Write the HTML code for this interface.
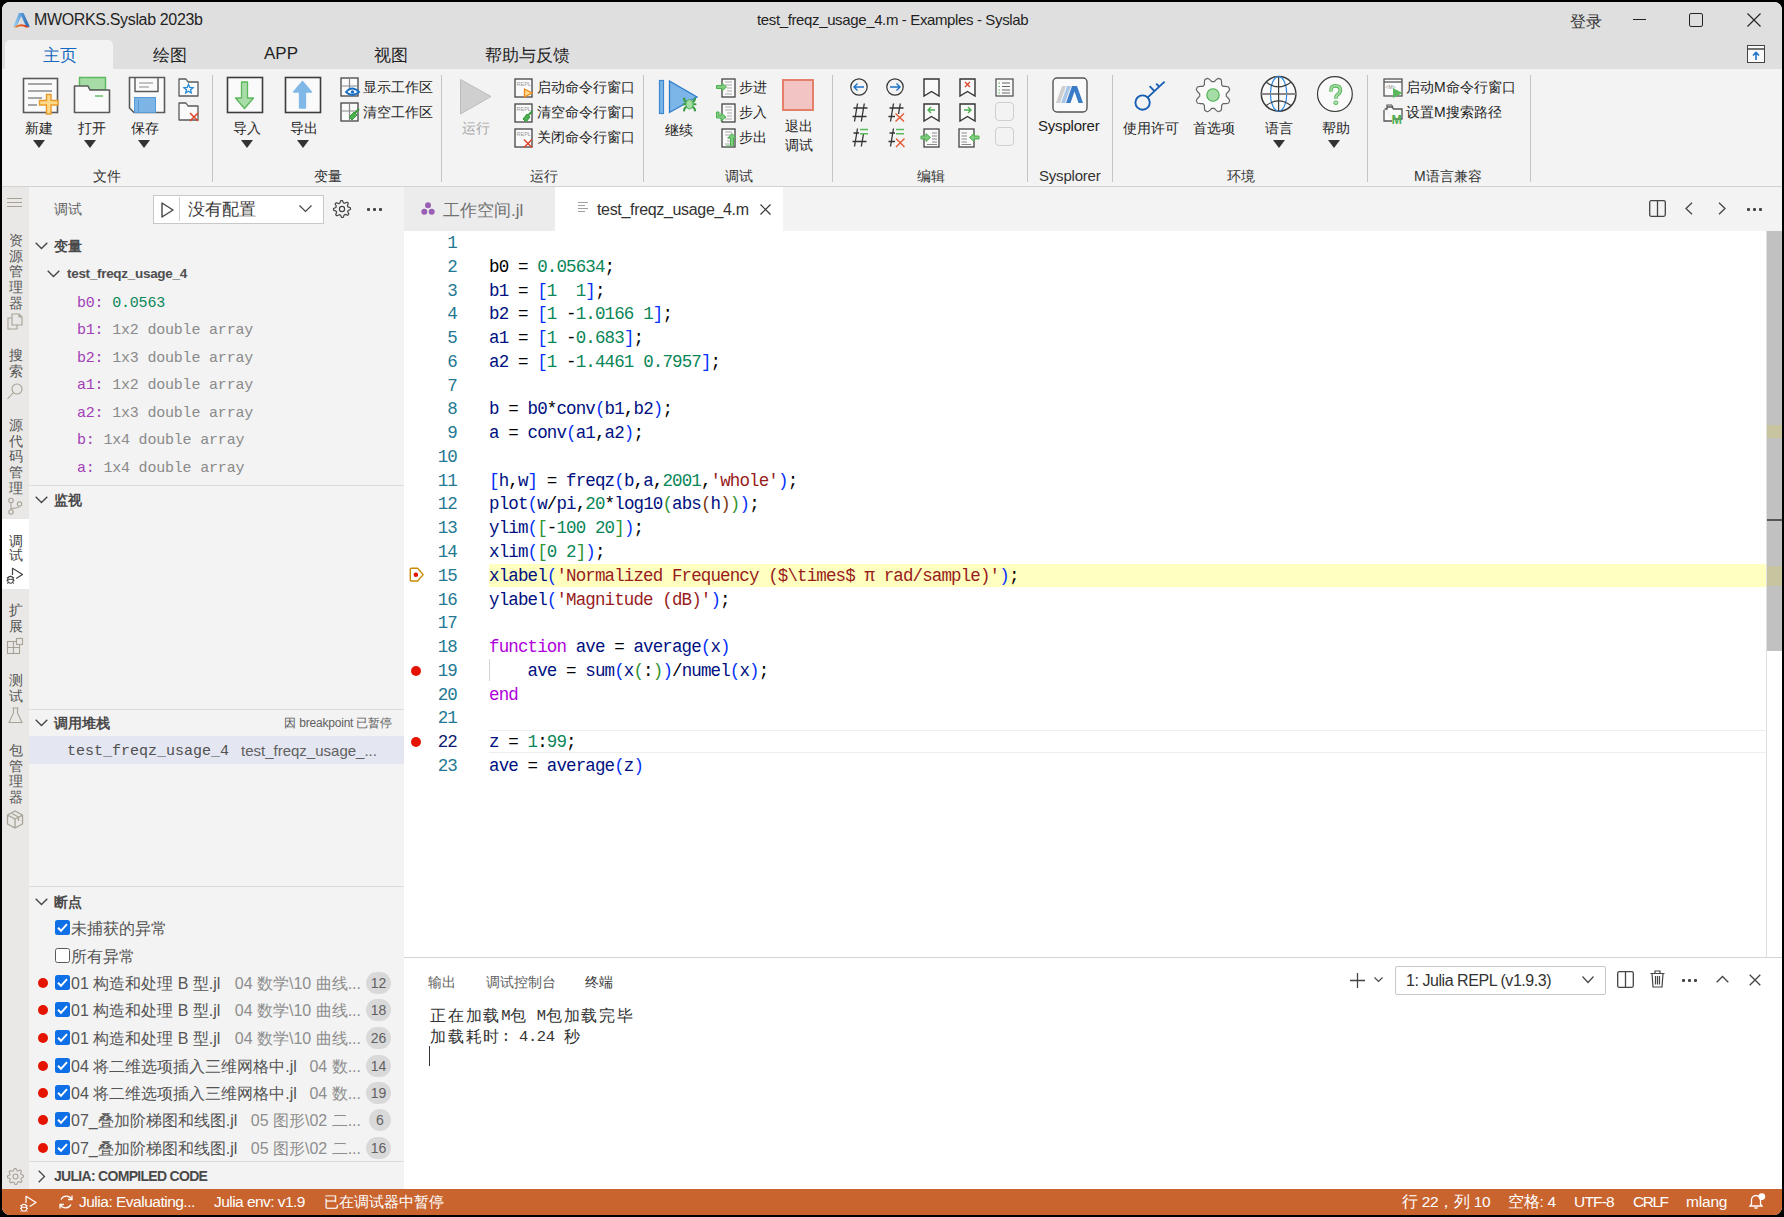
<!DOCTYPE html>
<html><head><meta charset="utf-8">
<style>
*{box-sizing:border-box;margin:0;padding:0}
html,body{width:1784px;height:1217px;overflow:hidden;background:#000}
body{position:relative;font-family:"Liberation Sans",sans-serif;color:#1f1f1f}
.a{position:absolute;white-space:nowrap}
.mono{font-family:"Liberation Mono",monospace}
svg{position:absolute;overflow:visible}
</style></head><body>
<div class="a" style="left:2px;top:2px;width:1780px;height:1213px;background:#f3f3f3;border-radius:8px"></div>
<div class="a" style="left:2px;top:2px;width:1780px;height:67px;background:#dfdfdf;border-radius:8px 8px 0 0"></div>
<div class="a" style="left:2px;top:69px;width:1780px;height:118px;background:#f3f3f3;border-bottom:1px solid #d2d2d2"></div>
<div class="a" style="left:2px;top:187px;width:27px;height:1002px;background:#e9e8e6"></div>
<div class="a" style="left:29px;top:187px;width:375px;height:1002px;background:#f3f3f3"></div>
<div class="a" style="left:404px;top:187px;width:1378px;height:44px;background:#f3f3f3"></div>
<div class="a" style="left:404px;top:231px;width:1378px;height:726px;background:#fff"></div>
<div class="a" style="left:404px;top:957px;width:1378px;height:232px;background:#fff;border-top:1px solid #d8d8d8"></div>
<div class="a" style="left:2px;top:1189px;width:1780px;height:26px;background:#c9642f;border-radius:0 0 8px 8px"></div>
<svg style="left:13px;top:12px" width="17" height="16" viewBox="0 0 17 16"><defs><linearGradient id="lg1" x1="0" y1="0" x2="1" y2="0"><stop offset="0" stop-color="#a8d4f2"/><stop offset="0.5" stop-color="#5a9ad8"/><stop offset="1" stop-color="#1f5fa8"/></linearGradient>
<linearGradient id="lg2" x1="0" y1="0" x2="1" y2="0"><stop offset="0" stop-color="#f58a1f"/><stop offset="1" stop-color="#d4201f"/></linearGradient></defs>
<path d="M5.8 1 H10.6 L16.8 14.8 H13.3 L8.2 4.2 L3.5 14.8 H0.2 Z" fill="url(#lg1)"/>
<path d="M0.8 15.4 Q8.3 9.2 16 15.4 L13 15.4 Q8.3 13 3.8 15.4 Z" fill="url(#lg2)"/></svg>
<div class="a" style="left:34px;top:11px;font-size:16px;letter-spacing:-0.35px;color:#1f1f1f">MWORKS.Syslab 2023b</div>
<div class="a" style="left:757px;top:11px;font-size:15px;letter-spacing:-0.37px;color:#1f1f1f">test_freqz_usage_4.m - Examples - Syslab</div>
<div class="a" style="left:1570px;top:12px;font-size:16px;color:#333">登录</div>
<div class="a" style="left:1633px;top:19px;width:13px;height:1px;background:#222"></div>
<div class="a" style="left:1689px;top:13px;width:14px;height:14px;border:1px solid #222;border-radius:2px"></div>
<svg style="left:1747px;top:13px" width="14" height="14" viewBox="0 0 14 14"><path d="M0.5 0.5 L13.5 13.5 M13.5 0.5 L0.5 13.5" stroke="#222" stroke-width="1.1"/></svg>
<svg style="left:1747px;top:45px" width="19" height="18" viewBox="0 0 19 18"><rect x="0.5" y="0.5" width="17" height="17" fill="#fafafa" stroke="#444"/><line x1="1" y1="4" x2="17" y2="4" stroke="#444" stroke-width="1.5"/><path d="M9 15 V8 M6 10.5 L9 7.5 L12 10.5" stroke="#1e73c8" stroke-width="1.6" fill="none"/></svg>
<div class="a" style="left:5px;top:40px;width:108px;height:30px;background:#f3f3f3;border-radius:5px 5px 0 0"></div>
<div class="a" style="left:43px;top:44px;font-size:17px;color:#1469be">主页</div>
<div class="a" style="left:153px;top:44px;font-size:17px;color:#1f1f1f">绘图</div>
<div class="a" style="left:264px;top:44px;font-size:17px;color:#1f1f1f">APP</div>
<div class="a" style="left:374px;top:44px;font-size:17px;color:#1f1f1f">视图</div>
<div class="a" style="left:485px;top:44px;font-size:17px;color:#1f1f1f">帮助与反馈</div>
<div class="a" style="left:212px;top:75px;width:1px;height:107px;background:#c4c4c4"></div>
<div class="a" style="left:441px;top:75px;width:1px;height:107px;background:#c4c4c4"></div>
<div class="a" style="left:643px;top:75px;width:1px;height:107px;background:#c4c4c4"></div>
<div class="a" style="left:832px;top:75px;width:1px;height:107px;background:#c4c4c4"></div>
<div class="a" style="left:1027px;top:75px;width:1px;height:107px;background:#c4c4c4"></div>
<div class="a" style="left:1112px;top:75px;width:1px;height:107px;background:#c4c4c4"></div>
<div class="a" style="left:1367px;top:75px;width:1px;height:107px;background:#c4c4c4"></div>
<div class="a" style="left:1530px;top:75px;width:1px;height:107px;background:#c4c4c4"></div>
<div class="a " style="left:93px;top:169px;font-size:14px;line-height:14px;color:#333;font-weight:normal;">文件</div>
<div class="a " style="left:314px;top:169px;font-size:14px;line-height:14px;color:#333;font-weight:normal;">变量</div>
<div class="a " style="left:530px;top:169px;font-size:14px;line-height:14px;color:#333;font-weight:normal;">运行</div>
<div class="a " style="left:725px;top:169px;font-size:14px;line-height:14px;color:#333;font-weight:normal;">调试</div>
<div class="a " style="left:917px;top:169px;font-size:14px;line-height:14px;color:#333;font-weight:normal;">编辑</div>
<div class="a " style="left:1227px;top:169px;font-size:14px;line-height:14px;color:#333;font-weight:normal;">环境</div>
<div class="a" style="left:1039px;top:168px;font-size:15px;line-height:15px;color:#333;letter-spacing:-0.2px">Sysplorer</div>
<div class="a" style="left:1414px;top:169px;font-size:14px;line-height:14px;color:#333">M语言兼容</div>
<svg style="left:22px;top:77px" width="38" height="38" viewBox="0 0 38 38"><rect x="1.5" y="1.5" width="34" height="34" fill="#fafafa" stroke="#5a5a5a" stroke-width="1.6"/>
<path d="M6 7 H30 M6 14 H30 M6 21 H20 M6 28 H15" stroke="#8a8a8a" stroke-width="1.4"/>
<path d="M24.5 17.5 H29 V23.5 H36 V28 H29 V37 H24.5 V28 H17.5 V23.5 H24.5 Z" fill="#ffd98a" stroke="#ea9a2a" stroke-width="1.4"/></svg>
<div class="a " style="left:25px;top:121px;font-size:14px;line-height:14px;color:#1f1f1f;font-weight:normal;">新建</div>
<svg style="left:33px;top:140px" width="12" height="8" viewBox="0 0 12 8"><path d="M0 0 L12 0 L6 8 Z" fill="#333"/></svg>
<svg style="left:73px;top:76px" width="38" height="38" viewBox="0 0 38 38"><path d="M6.5 1.5 H32.5 V14 H6.5 Z" fill="#a6dca6" stroke="#5cb85c" stroke-width="1.4"/>
<path d="M1.5 10 H15 L17 14 H36.5 V36.5 H1.5 Z" fill="#fafafa" stroke="#5a5a5a" stroke-width="1.6" stroke-linejoin="round"/>
<path d="M22 20 H30" stroke="#5cb85c" stroke-width="1.4"/></svg>
<div class="a " style="left:78px;top:121px;font-size:14px;line-height:14px;color:#1f1f1f;font-weight:normal;">打开</div>
<svg style="left:84px;top:140px" width="12" height="8" viewBox="0 0 12 8"><path d="M0 0 L12 0 L6 8 Z" fill="#333"/></svg>
<svg style="left:128px;top:76px" width="38" height="38" viewBox="0 0 38 38"><path d="M1.5 1.5 H36.5 V36.5 H6 L1.5 32 Z" fill="#fafafa" stroke="#5a5a5a" stroke-width="1.6"/>
<path d="M7 1.5 V15.5 H30 V1.5" fill="none" stroke="#5a5a5a" stroke-width="1.4"/>
<path d="M11 7 H25 M11 11 H21" stroke="#8a8a8a" stroke-width="1.2"/>
<rect x="6.5" y="21.5" width="21" height="15" fill="#7db4e6" stroke="#5a9ad6" stroke-width="1"/>
<path d="M10.5 24 V36" stroke="#5a9ad6" stroke-width="1"/></svg>
<div class="a " style="left:131px;top:121px;font-size:14px;line-height:14px;color:#1f1f1f;font-weight:normal;">保存</div>
<svg style="left:138px;top:140px" width="12" height="8" viewBox="0 0 12 8"><path d="M0 0 L12 0 L6 8 Z" fill="#333"/></svg>
<svg style="left:178px;top:78px" width="22" height="20" viewBox="0 0 22 20"><path d="M1 1 H8 L10 4 H20 V18 H1 Z" fill="#fafafa" stroke="#5a5a5a" stroke-width="1.3" stroke-linejoin="round"/>
<path d="M10.5 6.5 L11.8 9.5 L15 9.7 L12.6 11.8 L13.3 15 L10.5 13.3 L7.7 15 L8.4 11.8 L6 9.7 L9.2 9.5 Z" fill="none" stroke="#1e88d8" stroke-width="1.3"/></svg>
<svg style="left:178px;top:102px" width="22" height="20" viewBox="0 0 22 20"><path d="M1 1 H8 L10 4 H20 V18 H1 Z" fill="#fafafa" stroke="#5a5a5a" stroke-width="1.3" stroke-linejoin="round"/>
<path d="M12 11 L20 19 M20 11 L12 19" stroke="#e0442a" stroke-width="1.6"/></svg>
<svg style="left:226px;top:76px" width="38" height="38" viewBox="0 0 38 38"><rect x="1.5" y="1.5" width="35" height="35" fill="#fafafa" stroke="#3c3c3c" stroke-width="1.6"/>
<path d="M15.5 6 H21.5 V22 H27.5 L18.5 32.5 L9.5 22 H15.5 Z" fill="#a8dca8" stroke="#5cb85c" stroke-width="1.3" stroke-linejoin="round"/></svg>
<div class="a " style="left:233px;top:121px;font-size:14px;line-height:14px;color:#1f1f1f;font-weight:normal;">导入</div>
<svg style="left:241px;top:140px" width="12" height="8" viewBox="0 0 12 8"><path d="M0 0 L12 0 L6 8 Z" fill="#333"/></svg>
<svg style="left:284px;top:76px" width="38" height="38" viewBox="0 0 38 38"><rect x="1.5" y="1.5" width="35" height="35" fill="#fafafa" stroke="#3c3c3c" stroke-width="1.6"/>
<path d="M15.5 32 H21.5 V16 H27.5 L18.5 5.5 L9.5 16 H15.5 Z" fill="#80b8e8" stroke="#80b8e8" stroke-width="1.3" stroke-linejoin="round"/></svg>
<div class="a " style="left:290px;top:121px;font-size:14px;line-height:14px;color:#1f1f1f;font-weight:normal;">导出</div>
<svg style="left:297px;top:140px" width="12" height="8" viewBox="0 0 12 8"><path d="M0 0 L12 0 L6 8 Z" fill="#333"/></svg>
<svg style="left:340px;top:77px" width="20" height="20" viewBox="0 0 20 20"><rect x="1" y="1" width="17" height="18" fill="#fafafa" stroke="#444" stroke-width="1.3"/>
<path d="M1 9 H18 M9.5 1 V19" stroke="#888" stroke-width="1.2"/>
<path d="M6 15 Q12 8 19 15 Q12 21 6 15 Z" fill="#fff" stroke="#1a6fc4" stroke-width="1.8"/><circle cx="12.5" cy="15" r="1.8" fill="#1a6fc4"/></svg>
<div class="a " style="left:363px;top:80px;font-size:14px;line-height:14px;color:#1f1f1f;font-weight:normal;">显示工作区</div>
<svg style="left:340px;top:102px" width="20" height="20" viewBox="0 0 20 20"><rect x="1" y="1" width="17" height="18" fill="#fafafa" stroke="#444" stroke-width="1.3"/>
<path d="M1 9 H18 M9.5 1 V19" stroke="#888" stroke-width="1.2"/>
<path d="M9 15 L14 10 L17 13 L12 18 Z" fill="#4caf50" stroke="#3a9a3e" stroke-width="1"/><path d="M15 11 L19 7" stroke="#3a9a3e" stroke-width="2"/></svg>
<div class="a " style="left:363px;top:105px;font-size:14px;line-height:14px;color:#1f1f1f;font-weight:normal;">清空工作区</div>
<svg style="left:459px;top:78px" width="34" height="38" viewBox="0 0 34 38"><path d="M1.5 1.5 L32 18.5 L1.5 36 Z" fill="#cfcfcf" stroke="#bdbdbd" stroke-width="1"/></svg>
<div class="a " style="left:462px;top:121px;font-size:14px;line-height:14px;color:#a8a8a8;font-weight:normal;">运行</div>
<svg style="left:514px;top:78px" width="20" height="20" viewBox="0 0 20 20"><rect x="1" y="1" width="17" height="18" fill="#fafafa" stroke="#444" stroke-width="1.3"/>
<text x="2.5" y="8" font-size="5.5" font-family="Liberation Sans" fill="#999">REPL</text><path d="M10.5 11 L18 15 L10.5 19 Z" fill="#ffd98a" stroke="#ea8a1a" stroke-width="1.3"/></svg>
<div class="a " style="left:537px;top:80px;font-size:14px;line-height:14px;color:#1f1f1f;font-weight:normal;">启动命令行窗口</div>
<svg style="left:514px;top:103px" width="20" height="20" viewBox="0 0 20 20"><rect x="1" y="1" width="17" height="18" fill="#fafafa" stroke="#444" stroke-width="1.3"/>
<text x="2.5" y="8" font-size="5.5" font-family="Liberation Sans" fill="#999">REPL</text><path d="M9 16 L13 11 L16 14 L12 19 Z" fill="#4caf50" stroke="#3a9a3e" stroke-width="1"/><path d="M14.5 12 L18.5 8" stroke="#3a9a3e" stroke-width="2"/></svg>
<div class="a " style="left:537px;top:105px;font-size:14px;line-height:14px;color:#1f1f1f;font-weight:normal;">清空命令行窗口</div>
<svg style="left:514px;top:128px" width="20" height="20" viewBox="0 0 20 20"><rect x="1" y="1" width="17" height="18" fill="#fafafa" stroke="#444" stroke-width="1.3"/>
<text x="2.5" y="8" font-size="5.5" font-family="Liberation Sans" fill="#999">REPL</text><path d="M10 11.5 L18 19.5 M18 11.5 L10 19.5" stroke="#e0442a" stroke-width="1.5"/></svg>
<div class="a " style="left:537px;top:130px;font-size:14px;line-height:14px;color:#1f1f1f;font-weight:normal;">关闭命令行窗口</div>
<svg style="left:658px;top:79px" width="40" height="36" viewBox="0 0 40 36"><rect x="1.5" y="1.5" width="4" height="33" fill="#7cb5e8" stroke="#3a86d0" stroke-width="1.2"/>
<path d="M11.5 2 L39 18 L11.5 33.5 Z" fill="#7cb5e8" stroke="#2c7ccc" stroke-width="1.3"/>
<path d="M26 19.5 Q26.5 22.5 28.5 23 M37 19.5 Q36.5 22.5 34.5 23 M25.5 25.3 H28 M37.5 25.3 H35 M26 31.5 Q26.5 28.5 28.5 28 M37 31.5 Q36.5 28.5 34.5 28" fill="none" stroke="#3c9c44" stroke-width="2.1" stroke-linecap="round"/>
<ellipse cx="31.5" cy="25.3" rx="3.6" ry="4.6" fill="#a2dca2" stroke="#4caf50" stroke-width="1"/></svg>
<div class="a " style="left:665px;top:123px;font-size:14px;line-height:14px;color:#1f1f1f;font-weight:normal;">继续</div>
<svg style="left:716px;top:78px" width="21" height="20" viewBox="0 0 21 20"><rect x="6" y="1" width="13" height="18" fill="#fafafa" stroke="#444" stroke-width="1.3"/>
<path d="M9 4 H16 M9 7 H16 M11 10 H16 M11 13 H16 M9 16 H16" stroke="#aaa" stroke-width="1"/><path d="M0.5 7.5 H6 V5 L10.5 9 L6 13 V10.5 H0.5 Z" fill="#80cc80" stroke="#4caf50" stroke-width="1"/></svg>
<div class="a " style="left:739px;top:80px;font-size:14px;line-height:14px;color:#1f1f1f;font-weight:normal;">步进</div>
<svg style="left:716px;top:103px" width="21" height="20" viewBox="0 0 21 20"><rect x="6" y="1" width="13" height="18" fill="#fafafa" stroke="#444" stroke-width="1.3"/>
<path d="M9 4 H16 M9 7 H16 M11 10 H16 M11 13 H16 M9 16 H16" stroke="#aaa" stroke-width="1"/><path d="M0.5 9 V15 H5 V18 L10 14 L5 10 V12.5 H3 V9 Z" fill="#80cc80" stroke="#4caf50" stroke-width="1"/></svg>
<div class="a " style="left:739px;top:105px;font-size:14px;line-height:14px;color:#1f1f1f;font-weight:normal;">步入</div>
<svg style="left:716px;top:128px" width="21" height="20" viewBox="0 0 21 20"><rect x="6" y="1" width="13" height="18" fill="#fafafa" stroke="#444" stroke-width="1.3"/>
<path d="M9 4 H16 M9 7 H16 M11 10 H16 M11 13 H16 M9 16 H16" stroke="#aaa" stroke-width="1"/><path d="M10 18 H14.5 V10 H12 L16 5.5 L20 10 H17.5 V18" fill="#80cc80" stroke="#4caf50" stroke-width="1"/></svg>
<div class="a " style="left:739px;top:130px;font-size:14px;line-height:14px;color:#1f1f1f;font-weight:normal;">步出</div>
<div class="a" style="left:782px;top:79px;width:32px;height:32px;background:#f2c4c4;border:2px solid #e48068"></div>
<div class="a " style="left:785px;top:119px;font-size:14px;line-height:14px;color:#1f1f1f;font-weight:normal;">退出</div>
<div class="a " style="left:785px;top:138px;font-size:14px;line-height:14px;color:#1f1f1f;font-weight:normal;">调试</div>
<svg style="left:850px;top:78px" width="18" height="18" viewBox="0 0 18 18"><circle cx="9" cy="9" r="8.2" fill="none" stroke="#333" stroke-width="1.2"/><path d="M14 9 H4 M7.5 5.5 L4 9 L7.5 12.5" fill="none" stroke="#1e73c8" stroke-width="1.4"/></svg>
<svg style="left:886px;top:78px" width="18" height="18" viewBox="0 0 18 18"><circle cx="9" cy="9" r="8.2" fill="none" stroke="#333" stroke-width="1.2"/><path d="M4 9 H14 M10.5 5.5 L14 9 L10.5 12.5" fill="none" stroke="#1e73c8" stroke-width="1.4"/></svg>
<svg style="left:845px;top:103px" width="24" height="20" viewBox="0 0 24 20"><path d="M12.5 0.5 L9.5 18.5 M19.3 0.5 L16.3 18.5 M8.5 5 H22.5 M7.5 13.5 H21.5" stroke="#333" stroke-width="1.3" fill="none"/></svg>
<svg style="left:881px;top:103px" width="24" height="20" viewBox="0 0 24 20"><path d="M12.5 0.5 L9.5 18.5 M19.3 0.5 L17.5 11 M8.5 5 H22.5 M7.5 13.5 H14" stroke="#333" stroke-width="1.3" fill="none"/><path d="M14.5 10.5 L23 18.5 M23 10.5 L14.5 18.5" stroke="#e4572e" stroke-width="1.4"/></svg>
<svg style="left:845px;top:128px" width="24" height="20" viewBox="0 0 24 20"><path d="M12.5 0.5 L9.5 18.5 M18.5 6 L16.3 18.5 M8.5 5 H14 M7.5 13.5 H21.5" stroke="#333" stroke-width="1.3" fill="none"/><path d="M15 1.5 H23 M15 5.8 H23" stroke="#5cb85c" stroke-width="1.5"/></svg>
<svg style="left:881px;top:128px" width="24" height="20" viewBox="0 0 24 20"><path d="M12.5 0.5 L9.5 18.5 M8.5 5 H14 M7.5 13.5 H14" stroke="#333" stroke-width="1.3" fill="none"/><path d="M15 1.5 H23 M15 5.8 H23" stroke="#5cb85c" stroke-width="1.5"/><path d="M15 10.5 L23.5 19 M23.5 10.5 L15 19" stroke="#e4572e" stroke-width="1.4"/></svg>
<svg style="left:923px;top:78px" width="18" height="20" viewBox="0 0 18 20"><path d="M1 1 H16 V18 L8.5 13.5 L1 18 Z" fill="#fafafa" stroke="#333" stroke-width="1.4" stroke-linejoin="miter"/></svg>
<svg style="left:959px;top:78px" width="18" height="20" viewBox="0 0 18 20"><path d="M1 1 H16 V18 L8.5 13.5 L1 18 Z" fill="#fafafa" stroke="#333" stroke-width="1.4" stroke-linejoin="miter"/><path d="M6 4 L11 9 M11 4 L6 9" stroke="#e0442a" stroke-width="1.3"/></svg>
<svg style="left:923px;top:103px" width="18" height="20" viewBox="0 0 18 20"><path d="M1 1 H16 V18 L8.5 13.5 L1 18 Z" fill="#fafafa" stroke="#333" stroke-width="1.4" stroke-linejoin="miter"/><path d="M12 7 H5 M8 4 L5 7 L8 10" stroke="#4caf50" stroke-width="1.4" fill="none"/></svg>
<svg style="left:959px;top:103px" width="18" height="20" viewBox="0 0 18 20"><path d="M1 1 H16 V18 L8.5 13.5 L1 18 Z" fill="#fafafa" stroke="#333" stroke-width="1.4" stroke-linejoin="miter"/><path d="M5 7 H12 M9 4 L12 7 L9 10" stroke="#4caf50" stroke-width="1.4" fill="none"/></svg>
<svg style="left:921px;top:128px" width="21" height="20" viewBox="0 0 21 20"><rect x="3" y="1" width="15" height="18" fill="#fafafa" stroke="#444" stroke-width="1.3"/><path d="M11 5 H16 M11 8 H16 M11 11 H16 M11 14 H16 M6 16.5 H16" stroke="#888" stroke-width="1"/><path d="M0 8 H5 V5.5 L9.5 9.5 L5 13.5 V11 H0 Z" fill="#80cc80" stroke="#4caf50" stroke-width="1"/></svg>
<svg style="left:958px;top:128px" width="21" height="20" viewBox="0 0 21 20"><rect x="1" y="1" width="15" height="18" fill="#fafafa" stroke="#444" stroke-width="1.3"/><path d="M3.5 5 H9 M3.5 8 H9 M3.5 11 H9 M3.5 14 H9 M3.5 16.5 H13" stroke="#888" stroke-width="1"/><path d="M21 8 H16 V5.5 L11.5 9.5 L16 13.5 V11 H21 Z" fill="#80cc80" stroke="#4caf50" stroke-width="1"/></svg>
<svg style="left:995px;top:78px" width="19" height="19" viewBox="0 0 19 19"><rect x="1" y="1" width="17" height="17" fill="#fafafa" stroke="#555" stroke-width="1.3"/><path d="M7 5 H15 M7 8.5 H15 M7 12 H15 M7 15 H15" stroke="#666" stroke-width="1.1"/><path d="M3.5 5 H5 M3.5 8.5 H5 M3.5 12 H5 M3.5 15 H5" stroke="#4caf50" stroke-width="1.1"/></svg>
<div class="a" style="left:995px;top:102px;width:19px;height:19px;border:1px solid #cfcfcf;border-radius:4px;background:#f3f3f3"></div>
<div class="a" style="left:995px;top:127px;width:19px;height:19px;border:1px solid #cfcfcf;border-radius:4px;background:#f3f3f3"></div>
<svg style="left:1052px;top:77px" width="36" height="36" viewBox="0 0 36 36"><rect x="1" y="1" width="34" height="34" rx="4" fill="#fafafa" stroke="#555" stroke-width="1.4"/>
<path d="M4 26 L10 9 H14 L8 26 Z" fill="#cfcfcf"/>
<path d="M9 26 L15 9 H19 L13 26 Z" fill="#aac6e6"/>
<path d="M14 26 L20 9 H25 L31 26 H26.5 L22.5 14.5 L18.5 26 Z" fill="#3a7cc8"/></svg>
<div class="a" style="left:1038px;top:118px;font-size:15px;line-height:15px;color:#1f1f1f;letter-spacing:-0.2px">Sysplorer</div>
<svg style="left:1133px;top:80px" width="33" height="33" viewBox="0 0 33 33"><circle cx="9.6" cy="22.6" r="7.2" fill="none" stroke="#1a5fb4" stroke-width="1.9"/><path d="M14.8 17.4 L31.6 1.6 M21.5 11.1 L16.6 6.2 M26.2 6.7 L23.2 3.6" stroke="#1a5fb4" stroke-width="1.9" fill="none"/></svg>
<div class="a " style="left:1123px;top:121px;font-size:14px;line-height:14px;color:#1f1f1f;font-weight:normal;">使用许可</div>
<svg style="left:1195px;top:77px" width="36" height="36" viewBox="0 0 36 36"><path d="M31.30 18.00 L31.29 18.52 L31.26 19.04 L31.76 19.63 L32.41 20.28 L33.10 21.00 L33.76 21.78 L34.31 22.60 L34.64 23.41 L34.42 24.06 L34.17 24.70 L33.89 25.33 L33.59 25.94 L32.78 26.28 L31.82 26.47 L30.80 26.56 L29.80 26.58 L28.88 26.58 L28.11 26.64 L27.77 27.03 L27.40 27.40 L27.03 27.77 L26.64 28.11 L26.58 28.88 L26.58 29.80 L26.56 30.80 L26.47 31.82 L26.28 32.78 L25.94 33.59 L25.33 33.89 L24.70 34.17 L24.06 34.42 L23.41 34.64 L22.60 34.31 L21.78 33.76 L21.00 33.10 L20.28 32.41 L19.63 31.76 L19.04 31.26 L18.52 31.29 L18.00 31.30 L17.48 31.29 L16.96 31.26 L16.37 31.76 L15.72 32.41 L15.00 33.10 L14.22 33.76 L13.40 34.31 L12.59 34.64 L11.94 34.42 L11.30 34.17 L10.67 33.89 L10.06 33.59 L9.72 32.78 L9.53 31.82 L9.44 30.80 L9.42 29.80 L9.42 28.88 L9.36 28.11 L8.97 27.77 L8.60 27.40 L8.23 27.03 L7.89 26.64 L7.12 26.58 L6.20 26.58 L5.20 26.56 L4.18 26.47 L3.22 26.28 L2.41 25.94 L2.11 25.33 L1.83 24.70 L1.58 24.06 L1.36 23.41 L1.69 22.60 L2.24 21.78 L2.90 21.00 L3.59 20.28 L4.24 19.63 L4.74 19.04 L4.71 18.52 L4.70 18.00 L4.71 17.48 L4.74 16.96 L4.24 16.37 L3.59 15.72 L2.90 15.00 L2.24 14.22 L1.69 13.40 L1.36 12.59 L1.58 11.94 L1.83 11.30 L2.11 10.67 L2.41 10.06 L3.22 9.72 L4.18 9.53 L5.20 9.44 L6.20 9.42 L7.12 9.42 L7.89 9.36 L8.23 8.97 L8.60 8.60 L8.97 8.23 L9.36 7.89 L9.42 7.12 L9.42 6.20 L9.44 5.20 L9.53 4.18 L9.72 3.22 L10.06 2.41 L10.67 2.11 L11.30 1.83 L11.94 1.58 L12.59 1.36 L13.40 1.69 L14.22 2.24 L15.00 2.90 L15.72 3.59 L16.37 4.24 L16.96 4.74 L17.48 4.71 L18.00 4.70 L18.52 4.71 L19.04 4.74 L19.63 4.24 L20.28 3.59 L21.00 2.90 L21.78 2.24 L22.60 1.69 L23.41 1.36 L24.06 1.58 L24.70 1.83 L25.33 2.11 L25.94 2.41 L26.28 3.22 L26.47 4.18 L26.56 5.20 L26.58 6.20 L26.58 7.12 L26.64 7.89 L27.03 8.23 L27.40 8.60 L27.77 8.97 L28.11 9.36 L28.88 9.42 L29.80 9.42 L30.80 9.44 L31.82 9.53 L32.78 9.72 L33.59 10.06 L33.89 10.67 L34.17 11.30 L34.42 11.94 L34.64 12.59 L34.31 13.40 L33.76 14.22 L33.10 15.00 L32.41 15.72 L31.76 16.37 L31.26 16.96 L31.29 17.48 Z" fill="#fafafa" stroke="#666" stroke-width="1.2" stroke-linejoin="round"/><circle cx="18" cy="18" r="6.2" fill="#a6dca6" stroke="#4caf50" stroke-width="1.1"/></svg>
<div class="a " style="left:1193px;top:121px;font-size:14px;line-height:14px;color:#1f1f1f;font-weight:normal;">首选项</div>
<svg style="left:1260px;top:76px" width="38" height="37" viewBox="0 0 38 37"><circle cx="18.6" cy="17.9" r="17.3" fill="#fafafa" stroke="#3a3a3a" stroke-width="1.5"/>
<ellipse cx="18.6" cy="17.9" rx="8.2" ry="17.2" fill="none" stroke="#2f8ae0" stroke-width="1.2"/>
<path d="M1.3 17.9 H35.9" stroke="#8a8a8a" stroke-width="2"/>
<path d="M18.6 0.8 V35" stroke="#3a3a3a" stroke-width="1.2"/>
<path d="M6.3 6.3 Q18.6 15.5 30.9 6.3 M6.3 29.5 Q18.6 20.3 30.9 29.5" fill="none" stroke="#3a3a3a" stroke-width="1.1"/></svg>
<div class="a " style="left:1265px;top:121px;font-size:14px;line-height:14px;color:#1f1f1f;font-weight:normal;">语言</div>
<svg style="left:1273px;top:140px" width="12" height="8" viewBox="0 0 12 8"><path d="M0 0 L12 0 L6 8 Z" fill="#333"/></svg>
<svg style="left:1317px;top:76px" width="37" height="37" viewBox="0 0 37 37"><circle cx="17.9" cy="18.1" r="17.4" fill="#fafafa" stroke="#3a3a3a" stroke-width="1.2"/>
<g transform="translate(18.5 18) scale(0.85) translate(-18.5 -18)"><path d="M13.2 15.2 Q12.5 8.3 18.3 8.3 Q24.2 8.3 24.2 13.3 Q24.2 16.3 21.2 18.5 Q19 20 19 23.5" fill="none" stroke="#5cb85c" stroke-width="4.4" stroke-linejoin="round"/>
<path d="M13.2 15.2 Q12.5 8.3 18.3 8.3 Q24.2 8.3 24.2 13.3 Q24.2 16.3 21.2 18.5 Q19 20 19 23.5" fill="none" stroke="#a8dca8" stroke-width="2"/>
<ellipse cx="18.9" cy="28.3" rx="2.5" ry="2.2" fill="#a8dca8" stroke="#5cb85c" stroke-width="1.1"/></g></svg>
<div class="a " style="left:1322px;top:121px;font-size:14px;line-height:14px;color:#1f1f1f;font-weight:normal;">帮助</div>
<svg style="left:1328px;top:140px" width="12" height="8" viewBox="0 0 12 8"><path d="M0 0 L12 0 L6 8 Z" fill="#333"/></svg>
<svg style="left:1383px;top:78px" width="21" height="21" viewBox="0 0 21 21"><rect x="1" y="1" width="18" height="17" fill="#fafafa" stroke="#555" stroke-width="1.3"/><path d="M1 4 H19" stroke="#555" stroke-width="1.3"/><text x="2.5" y="11" font-size="5" font-family="Liberation Sans" fill="#888">&lt;M&gt;</text><path d="M10 10 L19.5 15 L10 20 Z" fill="#5cb85c"/></svg>
<div class="a " style="left:1406px;top:80px;font-size:14px;line-height:14px;color:#1f1f1f;font-weight:normal;">启动M命令行窗口</div>
<svg style="left:1383px;top:103px" width="21" height="21" viewBox="0 0 21 21"><path d="M4 4 H9 L10.5 6 H19 V16 H10 M1.5 6 H4 V4 M1 7 V18 H9" fill="#fafafa" stroke="#555" stroke-width="1.3"/><path d="M4 4 V2 H8.5 L10 4" fill="none" stroke="#555" stroke-width="1.2"/><text x="8.5" y="20.5" font-size="12.5" font-weight="bold" font-family="Liberation Sans" fill="#4caf50">M</text></svg>
<div class="a " style="left:1406px;top:105px;font-size:14px;line-height:14px;color:#1f1f1f;font-weight:normal;">设置M搜索路径</div>
<div class="a" style="left:2px;top:519px;width:27px;height:70px;background:#ffffff"></div>
<div class="a " style="left:9px;top:233.5px;font-size:13.5px;line-height:13.5px;color:#555;font-weight:normal;">资</div>
<div class="a " style="left:9px;top:249.5px;font-size:13.5px;line-height:13.5px;color:#555;font-weight:normal;">源</div>
<div class="a " style="left:9px;top:264.5px;font-size:13.5px;line-height:13.5px;color:#555;font-weight:normal;">管</div>
<div class="a " style="left:9px;top:280.5px;font-size:13.5px;line-height:13.5px;color:#555;font-weight:normal;">理</div>
<div class="a " style="left:9px;top:296.5px;font-size:13.5px;line-height:13.5px;color:#555;font-weight:normal;">器</div>
<div class="a " style="left:9px;top:348.5px;font-size:13.5px;line-height:13.5px;color:#555;font-weight:normal;">搜</div>
<div class="a " style="left:9px;top:364.5px;font-size:13.5px;line-height:13.5px;color:#555;font-weight:normal;">索</div>
<div class="a " style="left:9px;top:418.5px;font-size:13.5px;line-height:13.5px;color:#555;font-weight:normal;">源</div>
<div class="a " style="left:9px;top:434.5px;font-size:13.5px;line-height:13.5px;color:#555;font-weight:normal;">代</div>
<div class="a " style="left:9px;top:449.5px;font-size:13.5px;line-height:13.5px;color:#555;font-weight:normal;">码</div>
<div class="a " style="left:9px;top:465.5px;font-size:13.5px;line-height:13.5px;color:#555;font-weight:normal;">管</div>
<div class="a " style="left:9px;top:481.5px;font-size:13.5px;line-height:13.5px;color:#555;font-weight:normal;">理</div>
<div class="a " style="left:9px;top:534.5px;font-size:13.5px;line-height:13.5px;color:#444;font-weight:normal;">调</div>
<div class="a " style="left:9px;top:548.5px;font-size:13.5px;line-height:13.5px;color:#444;font-weight:normal;">试</div>
<div class="a " style="left:9px;top:603.5px;font-size:13.5px;line-height:13.5px;color:#555;font-weight:normal;">扩</div>
<div class="a " style="left:9px;top:619.5px;font-size:13.5px;line-height:13.5px;color:#555;font-weight:normal;">展</div>
<div class="a " style="left:9px;top:673.5px;font-size:13.5px;line-height:13.5px;color:#555;font-weight:normal;">测</div>
<div class="a " style="left:9px;top:689.5px;font-size:13.5px;line-height:13.5px;color:#555;font-weight:normal;">试</div>
<div class="a " style="left:9px;top:743.5px;font-size:13.5px;line-height:13.5px;color:#555;font-weight:normal;">包</div>
<div class="a " style="left:9px;top:759.5px;font-size:13.5px;line-height:13.5px;color:#555;font-weight:normal;">管</div>
<div class="a " style="left:9px;top:774.5px;font-size:13.5px;line-height:13.5px;color:#555;font-weight:normal;">理</div>
<div class="a " style="left:9px;top:790.5px;font-size:13.5px;line-height:13.5px;color:#555;font-weight:normal;">器</div>
<svg style="left:7px;top:198px" width="16" height="9" viewBox="0 0 16 9"><path d="M0 0.5 H15 M0 4.5 H15 M0 8.5 H15" stroke="#a8a296" stroke-width="1.1"/></svg>
<svg style="left:7px;top:313px" width="16" height="17" viewBox="0 0 16 17"><path d="M5 1 H12 L15 4 V12 H5 Z M12 1 V4 H15" fill="none" stroke="#a8a296" stroke-width="1.1"/><path d="M5 5 H1 V16 H10 V12" fill="none" stroke="#a8a296" stroke-width="1.1"/></svg>
<svg style="left:7px;top:383px" width="16" height="17" viewBox="0 0 16 17"><circle cx="10" cy="6" r="5" fill="none" stroke="#a8a296" stroke-width="1.1"/><path d="M6.5 9.5 L0.5 16" stroke="#a8a296" stroke-width="1.1"/></svg>
<svg style="left:8px;top:498px" width="14" height="17" viewBox="0 0 14 17"><circle cx="3" cy="2.5" r="2.2" fill="none" stroke="#a8a296" stroke-width="1.1"/><circle cx="3" cy="14" r="2.2" fill="none" stroke="#a8a296" stroke-width="1.1"/><circle cx="11.5" cy="6" r="2.2" fill="none" stroke="#a8a296" stroke-width="1.1"/><path d="M3 4.7 V11.8 M11.5 8.2 Q11.5 10 3 10.5" fill="none" stroke="#a8a296" stroke-width="1.1"/></svg>
<svg style="left:0px;top:560px" width="30" height="30" viewBox="0 560 30 30"><path d="M12.5 575 V568.3 L22.5 574.5 L16.2 578.6" fill="none" stroke="#444" stroke-width="1.2" stroke-linejoin="round"/><ellipse cx="10.5" cy="579.8" rx="2.8" ry="3.4" fill="none" stroke="#444" stroke-width="1.1"/><path d="M7.5 579.3 H13.5 M6.8 577.5 L8 578 M14.2 577.5 L13 578 M6.5 580.5 H7.8 M14.5 580.5 H13.2 M7 583.5 L8 582.8 M14 583.5 L13 582.8" stroke="#444" stroke-width="1"/></svg>
<svg style="left:7px;top:638px" width="17" height="17" viewBox="0 0 17 17"><rect x="0.5" y="3.5" width="12" height="12" fill="none" stroke="#a8a296" stroke-width="1.1"/><path d="M6.5 3.5 V15.5 M0.5 9.5 H12.5" stroke="#a8a296" stroke-width="1.1"/><rect x="9.5" y="0.5" width="6" height="6" fill="#e9e8e6" stroke="#a8a296" stroke-width="1.1"/></svg>
<svg style="left:8px;top:707px" width="15" height="17" viewBox="0 0 15 17"><path d="M4.5 1 H10.5 M5.5 1 V6 L1 15.5 H14 L9.5 6 V1" fill="none" stroke="#a8a296" stroke-width="1.1"/></svg>
<svg style="left:7px;top:810px" width="17" height="19" viewBox="0 0 17 19"><path d="M8 1 L15.5 5 V14 L8 18 L0.5 14 V5 Z M0.5 5 L8 9 L15.5 5 M8 9 V18 M4 3 L11.5 7 V11" fill="none" stroke="#a8a296" stroke-width="1.3" stroke-linejoin="round"/></svg>
<svg style="left:7px;top:1168px" width="17" height="17" viewBox="0 0 17 17"><path d="M16.41 7.33 L16.49 8.89 L14.32 9.96 L13.92 11.07 L14.93 13.27 L13.87 14.43 L11.58 13.65 L10.52 14.15 L9.67 16.41 L8.11 16.49 L7.04 14.32 L5.93 13.92 L3.73 14.93 L2.57 13.87 L3.35 11.58 L2.85 10.52 L0.59 9.67 L0.51 8.11 L2.68 7.04 L3.08 5.93 L2.07 3.73 L3.13 2.57 L5.42 3.35 L6.48 2.85 L7.33 0.59 L8.89 0.51 L9.96 2.68 L11.07 3.08 L13.27 2.07 L14.43 3.13 L13.65 5.42 L14.15 6.48 Z" fill="none" stroke="#a8a296" stroke-width="1.1" stroke-linejoin="round"/><circle cx="8.5" cy="8.5" r="2.5" fill="none" stroke="#a8a296" stroke-width="1.1"/></svg>
<div class="a " style="left:54px;top:202px;font-size:14px;line-height:14px;color:#616161;font-weight:normal;">调试</div>
<div class="a" style="left:153px;top:195px;width:171px;height:29px;background:#fff;border:1px solid #c8c8c8"></div>
<svg style="left:161px;top:202px" width="13" height="16" viewBox="0 0 13 16"><path d="M1 1 L12 8 L1 15 Z" fill="none" stroke="#444" stroke-width="1.4" stroke-linejoin="round"/></svg>
<div class="a" style="left:179px;top:197px;width:1px;height:24px;background:#d0d0d0"></div>
<div class="a " style="left:188px;top:201px;font-size:17px;line-height:17px;color:#3b3b3b;font-weight:normal;">没有配置</div>
<svg style="left:299px;top:205px" width="13" height="8" viewBox="0 0 13 8"><path d="M0.5 0.5 L6.5 6.5 L12.5 0.5" fill="none" stroke="#444" stroke-width="1.2"/></svg>
<svg style="left:333px;top:200px" width="18" height="18" viewBox="0 0 18 18"><path d="M17.41 7.75 L17.49 9.42 L15.11 10.53 L14.70 11.69 L15.83 14.06 L14.71 15.30 L12.24 14.40 L11.12 14.93 L10.25 17.41 L8.58 17.49 L7.47 15.11 L6.31 14.70 L3.94 15.83 L2.70 14.71 L3.60 12.24 L3.07 11.12 L0.59 10.25 L0.51 8.58 L2.89 7.47 L3.30 6.31 L2.17 3.94 L3.29 2.70 L5.76 3.60 L6.88 3.07 L7.75 0.59 L9.42 0.51 L10.53 2.89 L11.69 3.30 L14.06 2.17 L15.30 3.29 L14.40 5.76 L14.93 6.88 Z" fill="none" stroke="#444" stroke-width="1.2" stroke-linejoin="round"/><circle cx="9" cy="9" r="2.6" fill="none" stroke="#444" stroke-width="1.2"/></svg>
<div class="a" style="left:367px;top:208px;width:3px;height:3px;background:#444;border-radius:1px"></div>
<div class="a" style="left:373px;top:208px;width:3px;height:3px;background:#444;border-radius:1px"></div>
<div class="a" style="left:379px;top:208px;width:3px;height:3px;background:#444;border-radius:1px"></div>
<svg style="left:35px;top:242px" width="13" height="8" viewBox="0 0 13 8"><path d="M0.7 0.7 L6.5 6.5 L12.3 0.7" fill="none" stroke="#444" stroke-width="1.3"/></svg>
<div class="a " style="left:54px;top:239px;font-size:14px;line-height:14px;color:#4a4a4a;font-weight:bold;">变量</div>
<svg style="left:47px;top:270px" width="13" height="8" viewBox="0 0 13 8"><path d="M0.7 0.7 L6.5 6.5 L12.3 0.7" fill="none" stroke="#444" stroke-width="1.3"/></svg>
<div class="a" style="left:67px;top:266px;font-size:13.5px;line-height:16px;letter-spacing:-0.3px;color:#4f4f4f;font-weight:bold">test_freqz_usage_4</div>
<div class="a mono" style="left:77px;top:295.5px;font-size:15px;line-height:16px;letter-spacing:-0.2px;color:#098658"><span style="color:#a240b6">b0:</span> 0.0563</div>
<div class="a mono" style="left:77px;top:323.0px;font-size:15px;line-height:16px;letter-spacing:-0.2px;color:#8a8a8a"><span style="color:#a240b6">b1:</span> 1x2 double array</div>
<div class="a mono" style="left:77px;top:350.5px;font-size:15px;line-height:16px;letter-spacing:-0.2px;color:#8a8a8a"><span style="color:#a240b6">b2:</span> 1x3 double array</div>
<div class="a mono" style="left:77px;top:378.0px;font-size:15px;line-height:16px;letter-spacing:-0.2px;color:#8a8a8a"><span style="color:#a240b6">a1:</span> 1x2 double array</div>
<div class="a mono" style="left:77px;top:405.5px;font-size:15px;line-height:16px;letter-spacing:-0.2px;color:#8a8a8a"><span style="color:#a240b6">a2:</span> 1x3 double array</div>
<div class="a mono" style="left:77px;top:433.0px;font-size:15px;line-height:16px;letter-spacing:-0.2px;color:#8a8a8a"><span style="color:#a240b6">b:</span> 1x4 double array</div>
<div class="a mono" style="left:77px;top:460.5px;font-size:15px;line-height:16px;letter-spacing:-0.2px;color:#8a8a8a"><span style="color:#a240b6">a:</span> 1x4 double array</div>
<div class="a" style="left:29px;top:485px;width:375px;height:1px;background:#dcdcdc"></div>
<svg style="left:35px;top:496px" width="13" height="8" viewBox="0 0 13 8"><path d="M0.7 0.7 L6.5 6.5 L12.3 0.7" fill="none" stroke="#444" stroke-width="1.3"/></svg>
<div class="a " style="left:54px;top:493px;font-size:14px;line-height:14px;color:#4a4a4a;font-weight:bold;">监视</div>
<div class="a" style="left:29px;top:709px;width:375px;height:1px;background:#dcdcdc"></div>
<svg style="left:35px;top:719px" width="13" height="8" viewBox="0 0 13 8"><path d="M0.7 0.7 L6.5 6.5 L12.3 0.7" fill="none" stroke="#444" stroke-width="1.3"/></svg>
<div class="a " style="left:54px;top:716px;font-size:14px;line-height:14px;color:#4a4a4a;font-weight:bold;">调用堆栈</div>
<div class="a " style="left:284px;top:718px;font-size:11.5px;line-height:11.5px;color:#616161;font-weight:normal;">因 <span style="font-size:12px;letter-spacing:-0.2px">breakpoint</span> 已暂停</div>
<div class="a" style="left:29px;top:736px;width:375px;height:28px;background:#e4e6f1"></div>
<div class="a mono" style="left:67px;top:743.5px;font-size:15px;line-height:16px;letter-spacing:0px;color:#505050">test_freqz_usage_4</div>
<div class="a" style="left:241px;top:743px;font-size:15px;line-height:16px;color:#616161">test_freqz_usage_...</div>
<div class="a" style="left:29px;top:886px;width:375px;height:1px;background:#dcdcdc"></div>
<svg style="left:35px;top:898px" width="13" height="8" viewBox="0 0 13 8"><path d="M0.7 0.7 L6.5 6.5 L12.3 0.7" fill="none" stroke="#444" stroke-width="1.3"/></svg>
<div class="a " style="left:54px;top:895px;font-size:14px;line-height:14px;color:#4a4a4a;font-weight:bold;">断点</div>
<svg style="left:55px;top:920px" width="15" height="15" viewBox="0 0 15 15"><rect x="0" y="0" width="15" height="15" rx="2.5" fill="#0f6fe6"/><path d="M3 7.8 L6 10.8 L12 4.2" fill="none" stroke="#fff" stroke-width="2"/></svg>
<div class="a " style="left:71px;top:921px;font-size:16px;line-height:16px;color:#555;font-weight:normal;">未捕获的异常</div>
<div class="a" style="left:55px;top:948px;width:15px;height:15px;background:#fff;border:1.3px solid #5a5a5a;border-radius:2.5px"></div>
<div class="a " style="left:71px;top:949px;font-size:16px;line-height:16px;color:#555;font-weight:normal;">所有异常</div>
<div class="a" style="left:38px;top:978px;width:10px;height:10px;border-radius:50%;background:#e51400"></div>
<svg style="left:55px;top:975px" width="15" height="15" viewBox="0 0 15 15"><rect x="0" y="0" width="15" height="15" rx="2.5" fill="#0f6fe6"/><path d="M3 7.8 L6 10.8 L12 4.2" fill="none" stroke="#fff" stroke-width="2"/></svg>
<div class="a " style="left:71px;top:976px;font-size:16px;line-height:16px;color:#555;font-weight:normal;">01 构造和处理 B 型.jl</div>
<div class="a" id="bp0" style="right:1423px;top:976px;font-size:16px;line-height:16px;color:#8e8e8e">04 数学\10 曲线...</div>
<div class="a" style="left:366px;top:972px;width:25px;height:22px;border-radius:11px;background:#d9d9d9;color:#616161;font-size:14px;line-height:22px;text-align:center">12</div>
<div class="a" style="left:38px;top:1005px;width:10px;height:10px;border-radius:50%;background:#e51400"></div>
<svg style="left:55px;top:1002px" width="15" height="15" viewBox="0 0 15 15"><rect x="0" y="0" width="15" height="15" rx="2.5" fill="#0f6fe6"/><path d="M3 7.8 L6 10.8 L12 4.2" fill="none" stroke="#fff" stroke-width="2"/></svg>
<div class="a " style="left:71px;top:1003px;font-size:16px;line-height:16px;color:#555;font-weight:normal;">01 构造和处理 B 型.jl</div>
<div class="a" id="bp1" style="right:1423px;top:1003px;font-size:16px;line-height:16px;color:#8e8e8e">04 数学\10 曲线...</div>
<div class="a" style="left:366px;top:999px;width:25px;height:22px;border-radius:11px;background:#d9d9d9;color:#616161;font-size:14px;line-height:22px;text-align:center">18</div>
<div class="a" style="left:38px;top:1033px;width:10px;height:10px;border-radius:50%;background:#e51400"></div>
<svg style="left:55px;top:1030px" width="15" height="15" viewBox="0 0 15 15"><rect x="0" y="0" width="15" height="15" rx="2.5" fill="#0f6fe6"/><path d="M3 7.8 L6 10.8 L12 4.2" fill="none" stroke="#fff" stroke-width="2"/></svg>
<div class="a " style="left:71px;top:1031px;font-size:16px;line-height:16px;color:#555;font-weight:normal;">01 构造和处理 B 型.jl</div>
<div class="a" id="bp2" style="right:1423px;top:1031px;font-size:16px;line-height:16px;color:#8e8e8e">04 数学\10 曲线...</div>
<div class="a" style="left:366px;top:1027px;width:25px;height:22px;border-radius:11px;background:#d9d9d9;color:#616161;font-size:14px;line-height:22px;text-align:center">26</div>
<div class="a" style="left:38px;top:1061px;width:10px;height:10px;border-radius:50%;background:#e51400"></div>
<svg style="left:55px;top:1058px" width="15" height="15" viewBox="0 0 15 15"><rect x="0" y="0" width="15" height="15" rx="2.5" fill="#0f6fe6"/><path d="M3 7.8 L6 10.8 L12 4.2" fill="none" stroke="#fff" stroke-width="2"/></svg>
<div class="a " style="left:71px;top:1059px;font-size:16px;line-height:16px;color:#555;font-weight:normal;">04 将二维选项插入三维网格中.jl</div>
<div class="a" id="bp3" style="right:1423px;top:1059px;font-size:16px;line-height:16px;color:#8e8e8e">04 数...</div>
<div class="a" style="left:366px;top:1055px;width:25px;height:22px;border-radius:11px;background:#d9d9d9;color:#616161;font-size:14px;line-height:22px;text-align:center">14</div>
<div class="a" style="left:38px;top:1088px;width:10px;height:10px;border-radius:50%;background:#e51400"></div>
<svg style="left:55px;top:1085px" width="15" height="15" viewBox="0 0 15 15"><rect x="0" y="0" width="15" height="15" rx="2.5" fill="#0f6fe6"/><path d="M3 7.8 L6 10.8 L12 4.2" fill="none" stroke="#fff" stroke-width="2"/></svg>
<div class="a " style="left:71px;top:1086px;font-size:16px;line-height:16px;color:#555;font-weight:normal;">04 将二维选项插入三维网格中.jl</div>
<div class="a" id="bp4" style="right:1423px;top:1086px;font-size:16px;line-height:16px;color:#8e8e8e">04 数...</div>
<div class="a" style="left:366px;top:1082px;width:25px;height:22px;border-radius:11px;background:#d9d9d9;color:#616161;font-size:14px;line-height:22px;text-align:center">19</div>
<div class="a" style="left:38px;top:1115px;width:10px;height:10px;border-radius:50%;background:#e51400"></div>
<svg style="left:55px;top:1112px" width="15" height="15" viewBox="0 0 15 15"><rect x="0" y="0" width="15" height="15" rx="2.5" fill="#0f6fe6"/><path d="M3 7.8 L6 10.8 L12 4.2" fill="none" stroke="#fff" stroke-width="2"/></svg>
<div class="a " style="left:71px;top:1113px;font-size:16px;line-height:16px;color:#555;font-weight:normal;">07_叠加阶梯图和线图.jl</div>
<div class="a" id="bp5" style="right:1423px;top:1113px;font-size:16px;line-height:16px;color:#8e8e8e">05 图形\02 二...</div>
<div class="a" style="left:369px;top:1109px;width:22px;height:22px;border-radius:11px;background:#d9d9d9;color:#616161;font-size:14px;line-height:22px;text-align:center">6</div>
<div class="a" style="left:38px;top:1143px;width:10px;height:10px;border-radius:50%;background:#e51400"></div>
<svg style="left:55px;top:1140px" width="15" height="15" viewBox="0 0 15 15"><rect x="0" y="0" width="15" height="15" rx="2.5" fill="#0f6fe6"/><path d="M3 7.8 L6 10.8 L12 4.2" fill="none" stroke="#fff" stroke-width="2"/></svg>
<div class="a " style="left:71px;top:1141px;font-size:16px;line-height:16px;color:#555;font-weight:normal;">07_叠加阶梯图和线图.jl</div>
<div class="a" id="bp6" style="right:1423px;top:1141px;font-size:16px;line-height:16px;color:#8e8e8e">05 图形\02 二...</div>
<div class="a" style="left:366px;top:1137px;width:25px;height:22px;border-radius:11px;background:#d9d9d9;color:#616161;font-size:14px;line-height:22px;text-align:center">16</div>
<div class="a" style="left:29px;top:1161px;width:375px;height:1px;background:#dcdcdc"></div>
<svg style="left:38px;top:1170px" width="8" height="13" viewBox="0 0 8 13"><path d="M0.7 0.7 L6.5 6.5 L0.7 12.3" fill="none" stroke="#444" stroke-width="1.3"/></svg>
<div class="a" style="left:54px;top:1169px;font-size:14px;line-height:14px;letter-spacing:-0.7px;color:#4a4a4a;font-weight:bold">JULIA: COMPILED CODE</div>
<div class="a" style="left:404px;top:187px;width:151px;height:44px;background:#ececec"></div>
<div class="a" style="left:555px;top:187px;width:228px;height:44px;background:#fff"></div>
<svg style="left:421px;top:202px" width="14" height="14" viewBox="0 0 14 14"><circle cx="7" cy="3.2" r="3" fill="#9a5fb5"/><circle cx="3.3" cy="9.8" r="3" fill="#9a5fb5"/><circle cx="10.7" cy="9.8" r="3" fill="#9a5fb5"/></svg>
<div class="a " style="left:443px;top:202px;font-size:17px;line-height:17px;color:#717171;font-weight:normal;">工作空间.jl</div>
<svg style="left:578px;top:202px" width="10" height="11" viewBox="0 0 10 11"><path d="M0 0.5 H10 M0 3.5 H7 M0 6.5 H10 M0 9.5 H7" stroke="#a0a0a0" stroke-width="1.1"/></svg>
<div class="a" style="left:597px;top:202px;font-size:16px;line-height:16px;letter-spacing:-0.33px;color:#333">test_freqz_usage_4.m</div>
<svg style="left:760px;top:204px" width="11" height="11" viewBox="0 0 11 11"><path d="M0.5 0.5 L10.5 10.5 M10.5 0.5 L0.5 10.5" stroke="#333" stroke-width="1.2"/></svg>
<svg style="left:1649px;top:200px" width="17" height="17" viewBox="0 0 17 17"><rect x="0.7" y="0.7" width="15.6" height="15.6" rx="1.5" fill="none" stroke="#444" stroke-width="1.3"/><path d="M8.5 1 V16" stroke="#444" stroke-width="1.3"/></svg>
<svg style="left:1685px;top:202px" width="8" height="13" viewBox="0 0 8 13"><path d="M7 0.7 L1 6.5 L7 12.3" fill="none" stroke="#444" stroke-width="1.3"/></svg>
<svg style="left:1718px;top:202px" width="8" height="13" viewBox="0 0 8 13"><path d="M1 0.7 L7 6.5 L1 12.3" fill="none" stroke="#444" stroke-width="1.3"/></svg>
<div class="a" style="left:1747px;top:208px;width:3px;height:3px;background:#444;border-radius:1px"></div>
<div class="a" style="left:1753px;top:208px;width:3px;height:3px;background:#444;border-radius:1px"></div>
<div class="a" style="left:1759px;top:208px;width:3px;height:3px;background:#444;border-radius:1px"></div>
<div class="a" style="left:489px;top:564px;width:1278px;height:23px;background:#ffffc0"></div>
<div class="a" style="left:489px;top:730px;width:1278px;height:23px;border-top:1px solid #eeeeee;border-bottom:1px solid #eeeeee"></div>
<div class="a mono" style="left:404px;width:53px;text-align:right;top:232.00px;height:23.77px;line-height:23.77px;font-size:17.5px;letter-spacing:-0.875px;color:#237893">1</div>
<div class="a mono" style="left:404px;width:53px;text-align:right;top:255.77px;height:23.77px;line-height:23.77px;font-size:17.5px;letter-spacing:-0.875px;color:#237893">2</div>
<div class="a mono" style="left:489px;top:255.77px;height:23.77px;line-height:23.77px;font-size:17.5px;letter-spacing:-0.875px;white-space:pre;color:#001080"><span style="color:#000">b0</span> <span style="color:#000">=</span> <span style="color:#098658">0.05634</span><span style="color:#000">;</span></div>
<div class="a mono" style="left:404px;width:53px;text-align:right;top:279.54px;height:23.77px;line-height:23.77px;font-size:17.5px;letter-spacing:-0.875px;color:#237893">3</div>
<div class="a mono" style="left:489px;top:279.54px;height:23.77px;line-height:23.77px;font-size:17.5px;letter-spacing:-0.875px;white-space:pre;color:#001080">b1 <span style="color:#000">=</span> <span style="color:#0431fa">[</span><span style="color:#098658">1</span>  <span style="color:#098658">1</span><span style="color:#0431fa">]</span><span style="color:#000">;</span></div>
<div class="a mono" style="left:404px;width:53px;text-align:right;top:303.31px;height:23.77px;line-height:23.77px;font-size:17.5px;letter-spacing:-0.875px;color:#237893">4</div>
<div class="a mono" style="left:489px;top:303.31px;height:23.77px;line-height:23.77px;font-size:17.5px;letter-spacing:-0.875px;white-space:pre;color:#001080">b2 <span style="color:#000">=</span> <span style="color:#0431fa">[</span><span style="color:#098658">1</span> <span style="color:#000">-</span><span style="color:#098658">1.0166</span> <span style="color:#098658">1</span><span style="color:#0431fa">]</span><span style="color:#000">;</span></div>
<div class="a mono" style="left:404px;width:53px;text-align:right;top:327.08px;height:23.77px;line-height:23.77px;font-size:17.5px;letter-spacing:-0.875px;color:#237893">5</div>
<div class="a mono" style="left:489px;top:327.08px;height:23.77px;line-height:23.77px;font-size:17.5px;letter-spacing:-0.875px;white-space:pre;color:#001080">a1 <span style="color:#000">=</span> <span style="color:#0431fa">[</span><span style="color:#098658">1</span> <span style="color:#000">-</span><span style="color:#098658">0.683</span><span style="color:#0431fa">]</span><span style="color:#000">;</span></div>
<div class="a mono" style="left:404px;width:53px;text-align:right;top:350.85px;height:23.77px;line-height:23.77px;font-size:17.5px;letter-spacing:-0.875px;color:#237893">6</div>
<div class="a mono" style="left:489px;top:350.85px;height:23.77px;line-height:23.77px;font-size:17.5px;letter-spacing:-0.875px;white-space:pre;color:#001080">a2 <span style="color:#000">=</span> <span style="color:#0431fa">[</span><span style="color:#098658">1</span> <span style="color:#000">-</span><span style="color:#098658">1.4461</span> <span style="color:#098658">0.7957</span><span style="color:#0431fa">]</span><span style="color:#000">;</span></div>
<div class="a mono" style="left:404px;width:53px;text-align:right;top:374.62px;height:23.77px;line-height:23.77px;font-size:17.5px;letter-spacing:-0.875px;color:#237893">7</div>
<div class="a mono" style="left:404px;width:53px;text-align:right;top:398.39px;height:23.77px;line-height:23.77px;font-size:17.5px;letter-spacing:-0.875px;color:#237893">8</div>
<div class="a mono" style="left:489px;top:398.39px;height:23.77px;line-height:23.77px;font-size:17.5px;letter-spacing:-0.875px;white-space:pre;color:#001080">b <span style="color:#000">=</span> b0<span style="color:#000">*</span>conv<span style="color:#0431fa">(</span>b1<span style="color:#000">,</span>b2<span style="color:#0431fa">)</span><span style="color:#000">;</span></div>
<div class="a mono" style="left:404px;width:53px;text-align:right;top:422.16px;height:23.77px;line-height:23.77px;font-size:17.5px;letter-spacing:-0.875px;color:#237893">9</div>
<div class="a mono" style="left:489px;top:422.16px;height:23.77px;line-height:23.77px;font-size:17.5px;letter-spacing:-0.875px;white-space:pre;color:#001080">a <span style="color:#000">=</span> conv<span style="color:#0431fa">(</span>a1<span style="color:#000">,</span>a2<span style="color:#0431fa">)</span><span style="color:#000">;</span></div>
<div class="a mono" style="left:404px;width:53px;text-align:right;top:445.93px;height:23.77px;line-height:23.77px;font-size:17.5px;letter-spacing:-0.875px;color:#237893">10</div>
<div class="a mono" style="left:404px;width:53px;text-align:right;top:469.70px;height:23.77px;line-height:23.77px;font-size:17.5px;letter-spacing:-0.875px;color:#237893">11</div>
<div class="a mono" style="left:489px;top:469.70px;height:23.77px;line-height:23.77px;font-size:17.5px;letter-spacing:-0.875px;white-space:pre;color:#001080"><span style="color:#0431fa">[</span>h<span style="color:#000">,</span>w<span style="color:#0431fa">]</span> <span style="color:#000">=</span> freqz<span style="color:#0431fa">(</span>b<span style="color:#000">,</span>a<span style="color:#000">,</span><span style="color:#098658">2001</span><span style="color:#000">,</span><span style="color:#981c1c">'whole'</span><span style="color:#0431fa">)</span><span style="color:#000">;</span></div>
<div class="a mono" style="left:404px;width:53px;text-align:right;top:493.47px;height:23.77px;line-height:23.77px;font-size:17.5px;letter-spacing:-0.875px;color:#237893">12</div>
<div class="a mono" style="left:489px;top:493.47px;height:23.77px;line-height:23.77px;font-size:17.5px;letter-spacing:-0.875px;white-space:pre;color:#001080">plot<span style="color:#0431fa">(</span>w<span style="color:#000">/</span>pi<span style="color:#000">,</span><span style="color:#098658">20</span><span style="color:#000">*</span>log10<span style="color:#319331">(</span>abs<span style="color:#7b3814">(</span>h<span style="color:#7b3814">)</span><span style="color:#319331">)</span><span style="color:#0431fa">)</span><span style="color:#000">;</span></div>
<div class="a mono" style="left:404px;width:53px;text-align:right;top:517.24px;height:23.77px;line-height:23.77px;font-size:17.5px;letter-spacing:-0.875px;color:#237893">13</div>
<div class="a mono" style="left:489px;top:517.24px;height:23.77px;line-height:23.77px;font-size:17.5px;letter-spacing:-0.875px;white-space:pre;color:#001080">ylim<span style="color:#0431fa">(</span><span style="color:#319331">[</span><span style="color:#000">-</span><span style="color:#098658">100</span> <span style="color:#098658">20</span><span style="color:#319331">]</span><span style="color:#0431fa">)</span><span style="color:#000">;</span></div>
<div class="a mono" style="left:404px;width:53px;text-align:right;top:541.01px;height:23.77px;line-height:23.77px;font-size:17.5px;letter-spacing:-0.875px;color:#237893">14</div>
<div class="a mono" style="left:489px;top:541.01px;height:23.77px;line-height:23.77px;font-size:17.5px;letter-spacing:-0.875px;white-space:pre;color:#001080">xlim<span style="color:#0431fa">(</span><span style="color:#319331">[</span><span style="color:#098658">0</span> <span style="color:#098658">2</span><span style="color:#319331">]</span><span style="color:#0431fa">)</span><span style="color:#000">;</span></div>
<div class="a mono" style="left:404px;width:53px;text-align:right;top:564.78px;height:23.77px;line-height:23.77px;font-size:17.5px;letter-spacing:-0.875px;color:#237893">15</div>
<div class="a mono" style="left:489px;top:564.78px;height:23.77px;line-height:23.77px;font-size:17.5px;letter-spacing:-0.875px;white-space:pre;color:#001080">xlabel<span style="color:#0431fa">(</span><span style="color:#981c1c">'Normalized Frequency ($\times$ π rad/sample)'</span><span style="color:#0431fa">)</span><span style="color:#000">;</span></div>
<div class="a mono" style="left:404px;width:53px;text-align:right;top:588.55px;height:23.77px;line-height:23.77px;font-size:17.5px;letter-spacing:-0.875px;color:#237893">16</div>
<div class="a mono" style="left:489px;top:588.55px;height:23.77px;line-height:23.77px;font-size:17.5px;letter-spacing:-0.875px;white-space:pre;color:#001080">ylabel<span style="color:#0431fa">(</span><span style="color:#981c1c">'Magnitude (dB)'</span><span style="color:#0431fa">)</span><span style="color:#000">;</span></div>
<div class="a mono" style="left:404px;width:53px;text-align:right;top:612.32px;height:23.77px;line-height:23.77px;font-size:17.5px;letter-spacing:-0.875px;color:#237893">17</div>
<div class="a mono" style="left:404px;width:53px;text-align:right;top:636.09px;height:23.77px;line-height:23.77px;font-size:17.5px;letter-spacing:-0.875px;color:#237893">18</div>
<div class="a mono" style="left:489px;top:636.09px;height:23.77px;line-height:23.77px;font-size:17.5px;letter-spacing:-0.875px;white-space:pre;color:#001080"><span style="color:#af00db">function</span> ave <span style="color:#000">=</span> average<span style="color:#0431fa">(</span>x<span style="color:#0431fa">)</span></div>
<div class="a mono" style="left:404px;width:53px;text-align:right;top:659.86px;height:23.77px;line-height:23.77px;font-size:17.5px;letter-spacing:-0.875px;color:#237893">19</div>
<div class="a mono" style="left:489px;top:659.86px;height:23.77px;line-height:23.77px;font-size:17.5px;letter-spacing:-0.875px;white-space:pre;color:#001080">    ave <span style="color:#000">=</span> sum<span style="color:#0431fa">(</span>x<span style="color:#319331">(</span><span style="color:#000">:</span><span style="color:#319331">)</span><span style="color:#0431fa">)</span><span style="color:#000">/</span>numel<span style="color:#0431fa">(</span>x<span style="color:#0431fa">)</span><span style="color:#000">;</span></div>
<div class="a mono" style="left:404px;width:53px;text-align:right;top:683.63px;height:23.77px;line-height:23.77px;font-size:17.5px;letter-spacing:-0.875px;color:#237893">20</div>
<div class="a mono" style="left:489px;top:683.63px;height:23.77px;line-height:23.77px;font-size:17.5px;letter-spacing:-0.875px;white-space:pre;color:#001080"><span style="color:#af00db">end</span></div>
<div class="a mono" style="left:404px;width:53px;text-align:right;top:707.40px;height:23.77px;line-height:23.77px;font-size:17.5px;letter-spacing:-0.875px;color:#237893">21</div>
<div class="a mono" style="left:404px;width:53px;text-align:right;top:731.17px;height:23.77px;line-height:23.77px;font-size:17.5px;letter-spacing:-0.875px;color:#0b216f">22</div>
<div class="a mono" style="left:489px;top:731.17px;height:23.77px;line-height:23.77px;font-size:17.5px;letter-spacing:-0.875px;white-space:pre;color:#001080">z <span style="color:#000">=</span> <span style="color:#098658">1</span><span style="color:#000">:</span><span style="color:#098658">99</span><span style="color:#000">;</span></div>
<div class="a mono" style="left:404px;width:53px;text-align:right;top:754.94px;height:23.77px;line-height:23.77px;font-size:17.5px;letter-spacing:-0.875px;color:#237893">23</div>
<div class="a mono" style="left:489px;top:754.94px;height:23.77px;line-height:23.77px;font-size:17.5px;letter-spacing:-0.875px;white-space:pre;color:#001080">ave <span style="color:#000">=</span> average<span style="color:#0431fa">(</span>z<span style="color:#0431fa">)</span></div>
<div class="a" style="left:489px;top:659px;width:1px;height:22px;background:#d3d3d3"></div>
<div class="a" style="left:411px;top:665.7px;width:10px;height:10px;border-radius:50%;background:#e51400"></div>
<div class="a" style="left:411px;top:737.1px;width:10px;height:10px;border-radius:50%;background:#e51400"></div>
<svg style="left:409px;top:567px" width="16" height="16" viewBox="0 0 16 16"><path d="M1.3 2.2 Q1.3 1.2 2.3 1.2 H8.6 L14.2 7.6 L8.6 14 H2.3 Q1.3 14 1.3 13 Z" fill="#fff" stroke="#c88a00" stroke-width="1.4" stroke-linejoin="round"/><circle cx="6.9" cy="7.7" r="2.3" fill="#e51400"/></svg>
<div class="a" style="left:1766px;top:231px;width:1px;height:726px;background:#e0e0e0"></div>
<div class="a" style="left:1767px;top:231px;width:15px;height:290px;background:#c1c1c1"></div>
<div class="a" style="left:1767px;top:519px;width:15px;height:1.5px;background:#555"></div>
<div class="a" style="left:1767px;top:521px;width:15px;height:130px;background:#c1c1c1"></div>
<div class="a" style="left:1767px;top:425px;width:15px;height:13px;background:#c8c4a0"></div>
<div class="a" style="left:1767px;top:566px;width:15px;height:20px;background:#c8c4a0"></div>
<div class="a" style="left:404px;top:957px;width:1378px;height:1px;background:#d4d4d4"></div>
<div class="a " style="left:428px;top:975px;font-size:14px;line-height:14px;color:#616161;font-weight:normal;">输出</div>
<div class="a " style="left:486px;top:975px;font-size:14px;line-height:14px;color:#616161;font-weight:normal;">调试控制台</div>
<div class="a " style="left:585px;top:975px;font-size:14px;line-height:14px;color:#3b3b3b;font-weight:normal;">终端</div>
<div class="a" style="left:430.0px;top:1008px;font-size:16px;line-height:16px;color:#333">正</div>
<div class="a" style="left:447.8px;top:1008px;font-size:16px;line-height:16px;color:#333">在</div>
<div class="a" style="left:465.6px;top:1008px;font-size:16px;line-height:16px;color:#333">加</div>
<div class="a" style="left:483.4px;top:1008px;font-size:16px;line-height:16px;color:#333">载</div>
<div class="a mono" style="left:501.2px;top:1007px;font-size:15.5px;line-height:18px;color:#333">M</div>
<div class="a" style="left:510.1px;top:1008px;font-size:16px;line-height:16px;color:#333">包</div>
<div class="a mono" style="left:536.8px;top:1007px;font-size:15.5px;line-height:18px;color:#333">M</div>
<div class="a" style="left:545.7px;top:1008px;font-size:16px;line-height:16px;color:#333">包</div>
<div class="a" style="left:563.5px;top:1008px;font-size:16px;line-height:16px;color:#333">加</div>
<div class="a" style="left:581.3px;top:1008px;font-size:16px;line-height:16px;color:#333">载</div>
<div class="a" style="left:599.1px;top:1008px;font-size:16px;line-height:16px;color:#333">完</div>
<div class="a" style="left:616.9px;top:1008px;font-size:16px;line-height:16px;color:#333">毕</div>
<div class="a" style="left:430.0px;top:1029px;font-size:16px;line-height:16px;color:#333">加</div>
<div class="a" style="left:447.8px;top:1029px;font-size:16px;line-height:16px;color:#333">载</div>
<div class="a" style="left:465.6px;top:1029px;font-size:16px;line-height:16px;color:#333">耗</div>
<div class="a" style="left:483.4px;top:1029px;font-size:16px;line-height:16px;color:#333">时</div>
<div class="a mono" style="left:501.2px;top:1028px;font-size:15.5px;line-height:18px;color:#333">:</div>
<div class="a mono" style="left:519.0px;top:1028px;font-size:15.5px;line-height:18px;color:#333">4</div>
<div class="a mono" style="left:527.9px;top:1028px;font-size:15.5px;line-height:18px;color:#333">.</div>
<div class="a mono" style="left:536.8px;top:1028px;font-size:15.5px;line-height:18px;color:#333">2</div>
<div class="a mono" style="left:545.7px;top:1028px;font-size:15.5px;line-height:18px;color:#333">4</div>
<div class="a" style="left:563.5px;top:1029px;font-size:16px;line-height:16px;color:#333">秒</div>
<div class="a" style="left:429px;top:1046px;width:1px;height:20px;background:#333"></div>
<svg style="left:1350px;top:973px" width="15" height="15" viewBox="0 0 15 15"><path d="M7.5 0 V15 M0 7.5 H15" stroke="#444" stroke-width="1.3"/></svg>
<svg style="left:1374px;top:977px" width="9" height="6" viewBox="0 0 9 6"><path d="M0.5 0.5 L4.5 4.5 L8.5 0.5" fill="none" stroke="#444" stroke-width="1.1"/></svg>
<div class="a" style="left:1395px;top:966px;width:211px;height:29px;background:#fff;border:1px solid #c8c8c8;border-radius:2px"></div>
<div class="a" style="left:1406px;top:972px;font-size:16px;line-height:17px;letter-spacing:-0.45px;color:#333">1: Julia REPL (v1.9.3)</div>
<svg style="left:1582px;top:976px" width="12" height="8" viewBox="0 0 12 8"><path d="M0.5 0.5 L6 6.5 L11.5 0.5" fill="none" stroke="#444" stroke-width="1.2"/></svg>
<svg style="left:1617px;top:971px" width="17" height="17" viewBox="0 0 17 17"><rect x="0.7" y="0.7" width="15.6" height="15.6" rx="1.5" fill="none" stroke="#444" stroke-width="1.3"/><path d="M8.5 1 V16" stroke="#444" stroke-width="1.3"/></svg>
<svg style="left:1650px;top:970px" width="15" height="18" viewBox="0 0 15 18"><path d="M0.5 3.5 H14.5 M5 3.5 V1 H10 V3.5 M2 3.5 L3 17 H12 L13 3.5 M5.5 6 V14.5 M7.5 6 V14.5 M9.5 6 V14.5" fill="none" stroke="#444" stroke-width="1.2"/></svg>
<div class="a" style="left:1682px;top:979px;width:3px;height:3px;background:#444;border-radius:1px"></div>
<div class="a" style="left:1688px;top:979px;width:3px;height:3px;background:#444;border-radius:1px"></div>
<div class="a" style="left:1694px;top:979px;width:3px;height:3px;background:#444;border-radius:1px"></div>
<svg style="left:1716px;top:975px" width="13" height="8" viewBox="0 0 13 8"><path d="M0.7 7.3 L6.5 1.5 L12.3 7.3" fill="none" stroke="#444" stroke-width="1.3"/></svg>
<svg style="left:1749px;top:974px" width="12" height="12" viewBox="0 0 12 12"><path d="M0.7 0.7 L11.3 11.3 M11.3 0.7 L0.7 11.3" stroke="#444" stroke-width="1.3"/></svg>
<svg style="left:1.5px;top:1181.5px" width="40" height="37" viewBox="0 1180 40 37"><path d="M24 1201 V1194.3 L34 1200.5 L27.7 1204.6" fill="none" stroke="#fff" stroke-width="1.2" stroke-linejoin="round"/><ellipse cx="22" cy="1205.8" rx="2.8" ry="3.4" fill="none" stroke="#fff" stroke-width="1.1"/><path d="M19 1205.3 H25 M18.3 1203.5 L19.5 1204 M25.7 1203.5 L24.5 1204 M18 1206.5 H19.3 M26 1206.5 H24.7 M18.5 1209.5 L19.5 1208.8 M25.5 1209.5 L24.5 1208.8" stroke="#fff" stroke-width="1"/></svg>
<svg style="left:59px;top:1194px" width="15" height="16" viewBox="0 0 15 16"><path d="M12.5 5 A6 6 0 0 0 2 5.5 M1.5 11 A6 6 0 0 0 12 10.5" fill="none" stroke="#fff" stroke-width="1.3"/><path d="M13 1.5 V5.5 H9 M1 14.5 V10.5 H5" fill="none" stroke="#fff" stroke-width="1.3"/></svg>
<div class="a" style="left:79px;top:1194px;font-size:15.5px;line-height:16px;letter-spacing:-0.5px;color:#fff">Julia: Evaluating...</div>
<div class="a" style="left:214px;top:1194px;font-size:15.5px;line-height:16px;letter-spacing:-0.55px;color:#fff">Julia env: v1.9</div>
<div class="a" style="left:324px;top:1194px;font-size:15px;line-height:16px;color:#fff">已在调试器中暂停</div>
<div class="a" style="left:1402px;top:1194px;font-size:15.5px;line-height:16px;letter-spacing:-0.3px;color:#fff">行 22，列 10</div>
<div class="a" style="left:1508px;top:1194px;font-size:15.5px;line-height:16px;letter-spacing:-0.3px;color:#fff">空格: 4</div>
<div class="a" style="left:1574px;top:1194px;font-size:15.5px;line-height:16px;letter-spacing:-0.8px;color:#fff">UTF-8</div>
<div class="a" style="left:1633px;top:1194px;font-size:15.5px;line-height:16px;letter-spacing:-1.5px;color:#fff">CRLF</div>
<div class="a" style="left:1686px;top:1194px;font-size:15.5px;line-height:16px;letter-spacing:-0.2px;color:#fff">mlang</div>
<svg style="left:1748px;top:1193px" width="17" height="17" viewBox="0 0 17 17"><path d="M2 13 H14 L12.5 11 V7 A4.5 4.5 0 0 0 3.5 7 V11 Z M6.5 14.5 A2 2 0 0 0 9.5 14.5" fill="none" stroke="#fff" stroke-width="1.3"/><circle cx="13.8" cy="3.6" r="3.4" fill="#fff"/></svg>
</body></html>
